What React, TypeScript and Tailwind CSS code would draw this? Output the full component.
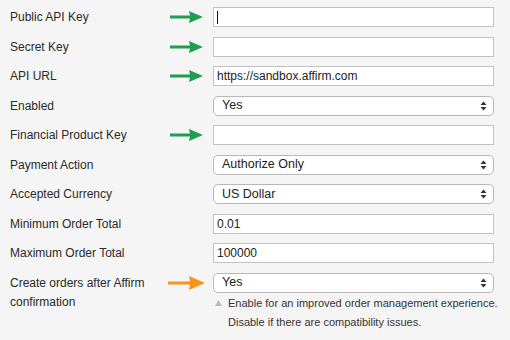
import React from 'react';

function Arrow({ color }: { color: 'green' | 'orange' }) {
  if (color === 'orange') {
    return (
      <svg width="38" height="16" viewBox="0 0 38 16" className="ml-[-2px]">
        <path d="M0 6.5 H22 L21 1 L37 8 L21 15 L22 9.5 H0 Z" fill="#f7941d" />
      </svg>
    );
  }
  return (
    <svg width="34" height="14" viewBox="0 0 34 14">
      <path d="M0 5.5 H20 L19 1 L33 7 L19 13 L20 8.5 H0 Z" fill="#1f9e4f" />
    </svg>
  );
}

function SelectBox({ value }: { value: string }) {
  return (
    <div className="relative w-[281px] h-[20px] bg-white border border-[#b8b8b8] rounded-[5px] flex items-center pl-[8px] text-[12.5px] text-[#222]">
      {value}
      <svg width="7" height="10" viewBox="0 0 7 10" className="absolute right-[6px] top-[4px]">
        <path d="M3.5 0.5 L6.5 4 H0.5 Z" fill="#333" />
        <path d="M3.5 9.5 L6.5 6 H0.5 Z" fill="#333" />
      </svg>
    </div>
  );
}

function TextBox({ value, caret }: { value?: string; caret?: boolean }) {
  return (
    <div className="w-[281px] h-[20px] bg-white border border-[#c2c2c2] flex items-center pl-[3px] text-[12px] text-[#222]">
      {caret && <span className="inline-block w-px h-[13px] bg-[#111]" />}
      {value}
    </div>
  );
}

const rows: { label: string; arrow?: 'green'; kind: 'text' | 'select'; value?: string; caret?: boolean }[] = [
  { label: 'Public API Key', arrow: 'green', kind: 'text', caret: true },
  { label: 'Secret Key', arrow: 'green', kind: 'text' },
  { label: 'API URL', arrow: 'green', kind: 'text', value: 'https://sandbox.affirm.com' },
  { label: 'Enabled', kind: 'select', value: 'Yes' },
  { label: 'Financial Product Key', arrow: 'green', kind: 'text' },
  { label: 'Payment Action', kind: 'select', value: 'Authorize Only' },
  { label: 'Accepted Currency', kind: 'select', value: 'US Dollar' },
  { label: 'Minimum Order Total', kind: 'text', value: '0.01' },
  { label: 'Maximum Order Total', kind: 'text', value: '100000' },
];

export default function App() {
  return (
    <div className="w-[510px] h-[340px] bg-[#f5f5f5] pt-[7px] pl-[10px] text-[#2a2a2a] font-['Liberation_Sans',Arial,sans-serif] text-[12px] overflow-hidden">
      <div className="flex flex-col gap-[9.5px]">
        {rows.map(r => (
          <div key={r.label} className="flex items-center h-[20px]">
            <div className="w-[160px] text-[12px]">{r.label}</div>
            <div className="w-[43px] flex items-center">{r.arrow && <Arrow color="green" />}</div>
            {r.kind === 'text' ? <TextBox value={r.value} caret={r.caret} /> : <SelectBox value={r.value || ''} />}
          </div>
        ))}

        <div className="flex items-start">
          <div className="w-[160px] text-[12px] leading-[19px] pt-[1px]">
            Create orders after Affirm
            <br />
            confirmation
          </div>
          <div className="w-[43px] h-[20px] flex items-center">
            <Arrow color="orange" />
          </div>
          <div className="flex flex-col">
            <SelectBox value="Yes" />
            <div className="flex items-start text-[11px] leading-[19px] text-[#333] mt-[1px]">
              <div className="w-[15px] pl-[2px] pt-[6px]">
                <svg width="7" height="6" viewBox="0 0 7 6">
                  <path d="M3.5 0 L7 6 H0 Z" fill="#b4bcc4" />
                </svg>
              </div>
              <div>
                Enable for an improved order management experience.
                <br />
                Disable if there are compatibility issues.
              </div>
            </div>
          </div>
        </div>
      </div>
    </div>
  );
}
